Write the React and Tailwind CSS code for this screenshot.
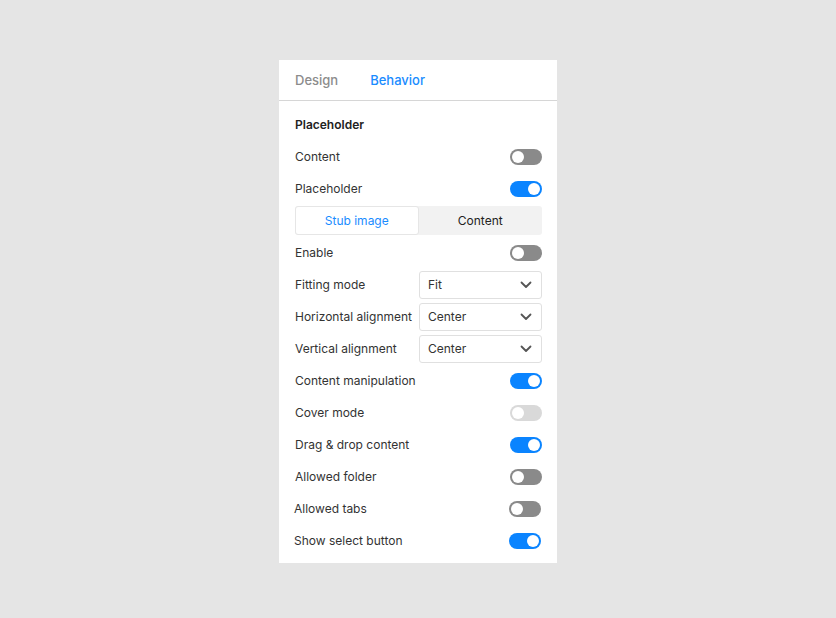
import { useState } from "react";

function Toggle({ on, disabled }) {
  const bg = disabled ? "bg-[#d9d9d9]" : on ? "bg-[#0a84ff]" : "bg-[#8a8a8a]";
  return (
    <span className={`flex h-4 w-8 items-center rounded-full px-[2px] ${bg} ${on ? "justify-end" : "justify-start"}`}>
      <span className="h-3 w-3 rounded-full bg-white" />
    </span>
  );
}

function ToggleRow({ label, on, disabled, shift }) {
  return (
    <div className={`flex h-8 items-center justify-between pt-px ${shift ? "-ml-px mr-px" : ""}`}>
      <span>{label}</span>
      <Toggle on={on} disabled={disabled} />
    </div>
  );
}

function SelectRow({ label, value }) {
  return (
    <div className="flex h-8 items-center justify-between pt-px">
      <span>{label}</span>
      <div className="flex h-7 w-[123px] items-center justify-between rounded-[3px] border border-[#e0e0e0] pl-2 pr-[9px]">
        <span>{value}</span>
        <svg width="12" height="8" viewBox="0 0 12 8" fill="none">
          <path d="M1.5 1.5 6 6l4.5-4.5" stroke="#555" strokeWidth="1.8" strokeLinecap="round" strokeLinejoin="round" />
        </svg>
      </div>
    </div>
  );
}

export default function App() {
  const [tab, setTab] = useState("behavior");

  return (
    <div className="flex min-h-screen justify-center bg-[#e5e5e5] pt-[60px] font-['Inter',sans-serif] text-[12px] text-[#333]">
      <div className="h-[503px] w-[278px] bg-white">
        <div className="flex h-[41px] items-center gap-8 border-b border-[#d6d6d6] px-4 pt-[2px] text-[13px] font-medium">
          <button type="button" onClick={() => setTab("design")} className={tab === "design" ? "text-[#1a8cff]" : "text-[#8c8c8c]"}>
            Design
          </button>
          <button type="button" onClick={() => setTab("behavior")} className={tab === "behavior" ? "text-[#1a8cff]" : "text-[#8c8c8c]"}>
            Behavior
          </button>
        </div>

        <div className="pl-4 pr-[15px]">
          <div className="flex h-[39px] items-center pt-[9px] font-semibold text-[#222]">Placeholder</div>

          <ToggleRow label="Content" on={false} />
          <ToggleRow label="Placeholder" on />

          <div className="flex h-8 items-center pt-px">
            <div className="grid h-[29px] w-full grid-cols-2 rounded-[3px] bg-[#f2f2f2]">
              <div className="flex items-center justify-center rounded-[3px] border border-[#e6e6e6] bg-white text-[#1a8cff]">Stub image</div>
              <div className="flex items-center justify-center text-[#222]">Content</div>
            </div>
          </div>

          <ToggleRow label="Enable" on={false} />
          <SelectRow label="Fitting mode" value="Fit" />
          <SelectRow label="Horizontal alignment" value="Center" />
          <SelectRow label="Vertical alignment" value="Center" />
          <ToggleRow label="Content manipulation" on />
          <ToggleRow label="Cover mode" on={false} disabled />
          <ToggleRow label="Drag & drop content" on />
          <ToggleRow label="Allowed folder" on={false} />
          <ToggleRow label="Allowed tabs" on={false} shift />
          <ToggleRow label="Show select button" on shift />
        </div>
      </div>
    </div>
  );
}
